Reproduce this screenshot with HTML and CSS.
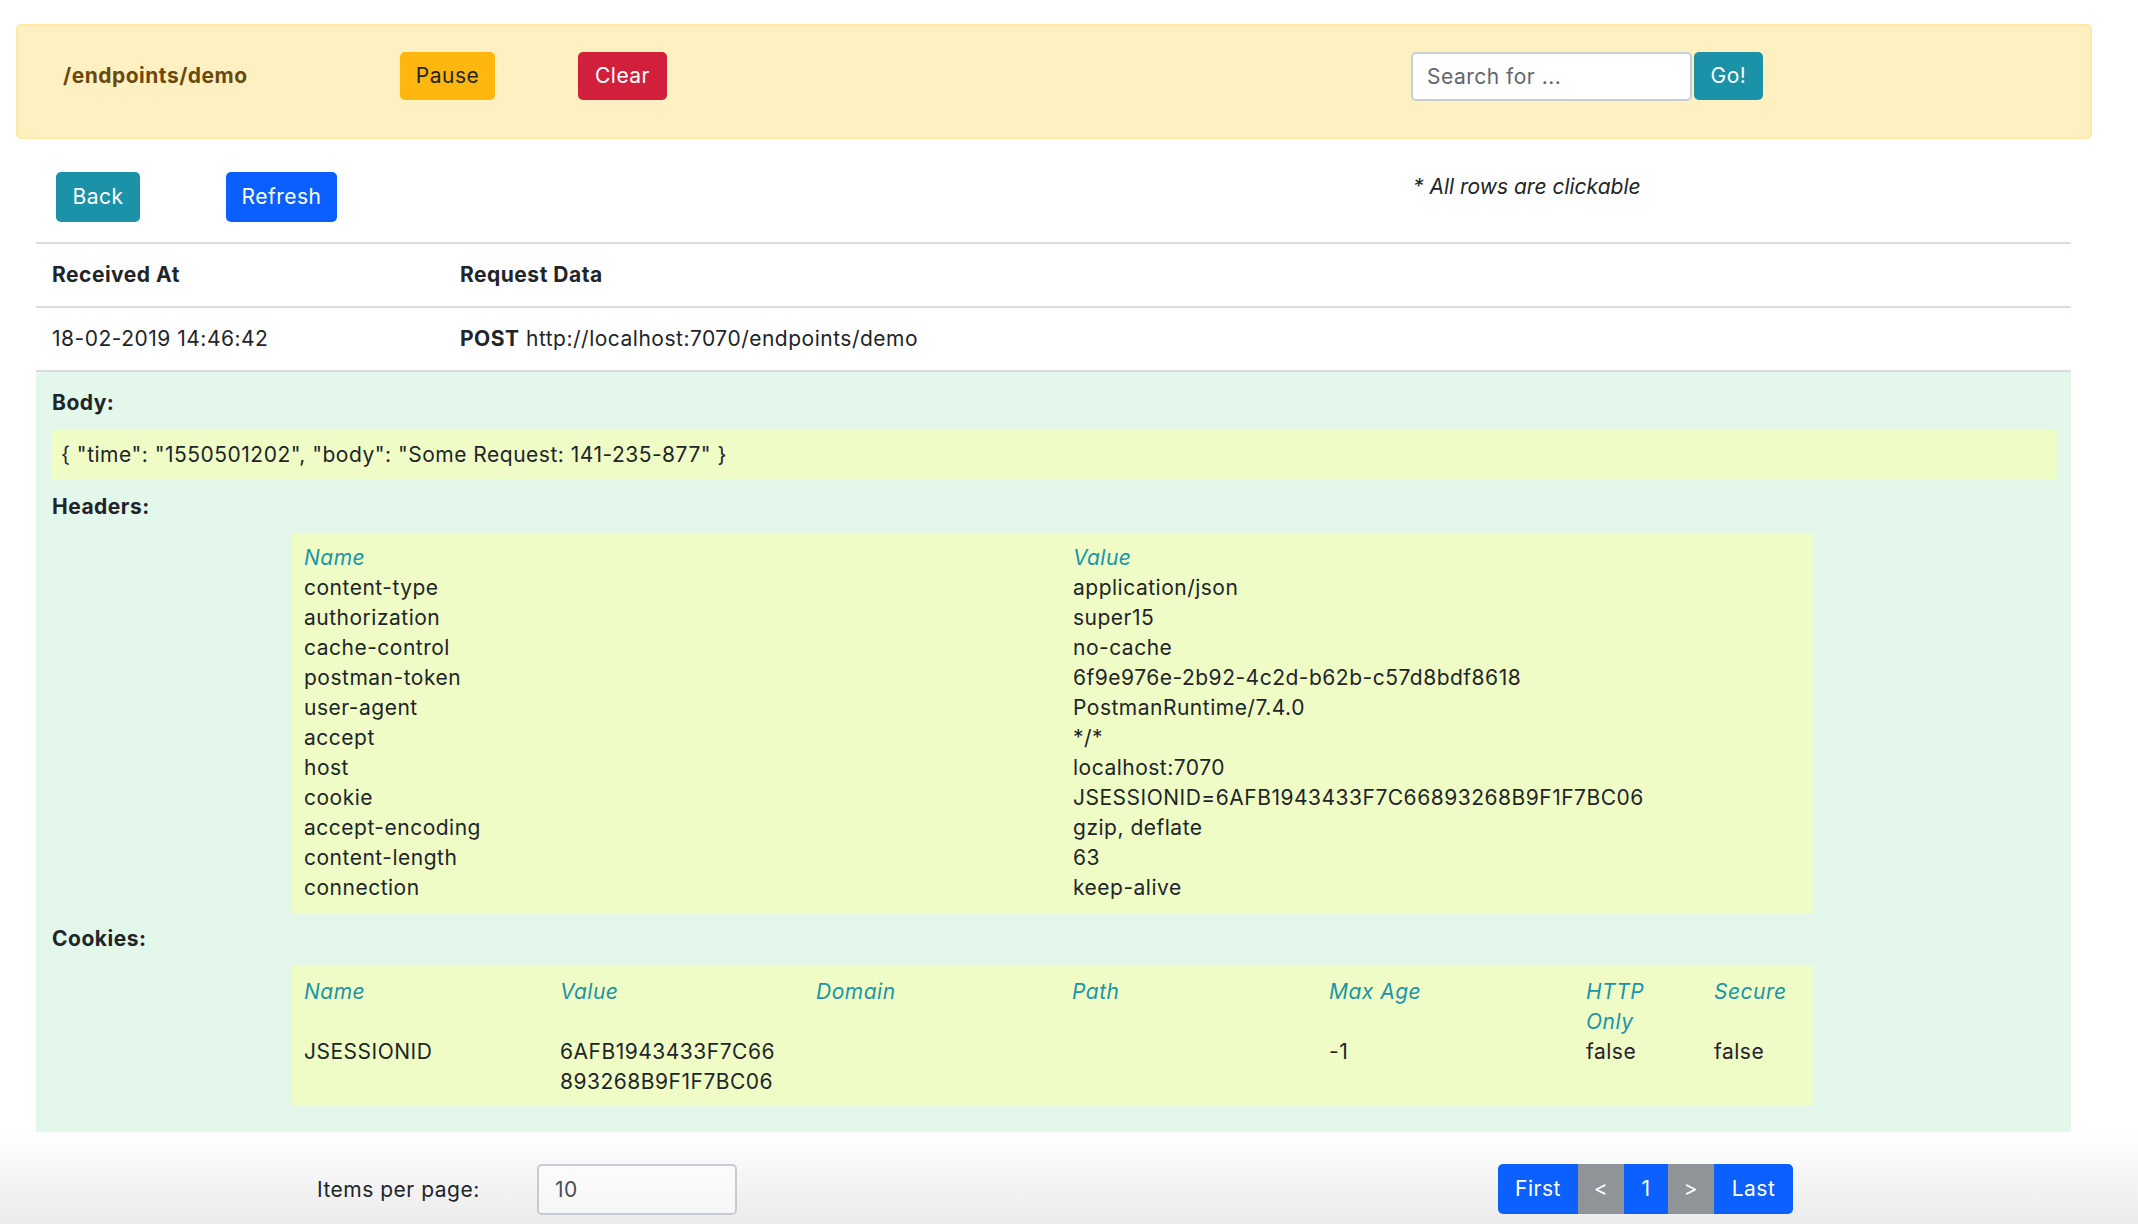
FILE: index.html
```html
<!DOCTYPE html>
<html>
<head>
<meta charset="utf-8">
<link rel="stylesheet" href="styles.css">
</head>
<body>
<div class="banner">
  <div class="title">/endpoints/demo</div>
  <button class="btn btn-warning pause">Pause</button>
  <button class="btn btn-danger clear">Clear</button>
  <div class="search">
    <input class="search-input" type="text" placeholder="Search for ...">
    <button class="btn btn-info go">Go!</button>
  </div>
</div>

<div class="content">
  <div class="toolbar">
    <button class="btn btn-info back">Back</button>
    <button class="btn btn-primary refresh">Refresh</button>
    <div class="note">* All rows are clickable</div>
  </div>

  <div class="reqtable">
    <div class="reqrow head">
      <div class="c1">Received At</div>
      <div class="c2">Request Data</div>
    </div>
    <div class="reqrow">
      <div class="c1">18-02-2019 14:46:42</div>
      <div class="c2"><b>POST</b> http://localhost:7070/endpoints/demo</div>
    </div>
  </div>

  <div class="details">
    <div class="label label-body">Body:</div>
    <div class="bodybox">{ "time": "1550501202", "body": "Some Request: 141-235-877" }</div>

    <div class="label">Headers:</div>
    <div class="kv headers">
      <div class="th">Name</div><div class="th">Value</div>
      <div>content-type</div><div>application/json</div>
      <div>authorization</div><div>super15</div>
      <div>cache-control</div><div>no-cache</div>
      <div>postman-token</div><div>6f9e976e-2b92-4c2d-b62b-c57d8bdf8618</div>
      <div>user-agent</div><div>PostmanRuntime/7.4.0</div>
      <div>accept</div><div>*/*</div>
      <div>host</div><div>localhost:7070</div>
      <div>cookie</div><div>JSESSIONID=6AFB1943433F7C66893268B9F1F7BC06</div>
      <div>accept-encoding</div><div>gzip, deflate</div>
      <div>content-length</div><div>63</div>
      <div>connection</div><div>keep-alive</div>
    </div>

    <div class="label">Cookies:</div>
    <div class="kv cookies">
      <div class="th">Name</div>
      <div class="th">Value</div>
      <div class="th">Domain</div>
      <div class="th">Path</div>
      <div class="th">Max Age</div>
      <div class="th">HTTP Only</div>
      <div class="th">Secure</div>
      <div>JSESSIONID</div>
      <div class="cval">6AFB1943433F7C66893268B9F1F7BC06</div>
      <div></div>
      <div></div>
      <div>-1</div>
      <div>false</div>
      <div>false</div>
    </div>
  </div>
</div>

<div class="footer">
  <div class="perpage">
    <span class="pp-label">Items per page:</span>
    <input class="pp-input" type="text" value="10">
  </div>
  <div class="pager">
    <span class="pg pg-blue first">First</span>
    <span class="pg pg-gray">&lt;</span>
    <span class="pg pg-blue num">1</span>
    <span class="pg pg-gray">&gt;</span>
    <span class="pg pg-blue last">Last</span>
  </div>
</div>
</body>
</html>
```

FILE: styles.css
```css
* { box-sizing: border-box; }

html, body {
  margin: 0;
  padding: 0;
  height: 1224px;
  overflow: hidden;
  background: #ffffff;
}

body {
  font-family: Inter, "Noto Sans", "Liberation Sans", sans-serif;
  font-size: 21px;
  letter-spacing: 0.5px;
  line-height: 30px;
  color: #212529;
  display: flex;
  flex-direction: column;
}

.btn {
  font-family: inherit;
  font-size: 21px;
  letter-spacing: 0.5px;
  line-height: 30px;
  border: none;
  border-radius: 5px;
  height: 48px;
  padding: 0;
  color: #ffffff;
  cursor: pointer;
}

.btn-warning { background: #ffb60f; color: #212529; }
.btn-danger { background: #d21f3c; }
.btn-info { background: #1b92a8; }
.btn-primary { background: #0b5ffe; }

/* Banner */
.banner {
  margin: 24px 46px 0 16px;
  height: 115px;
  flex: none;
  background: #fff0c2;
  border: 2px solid #ffe9a8;
  border-radius: 5px;
  display: flex;
  align-items: flex-start;
  padding-top: 26px;
}

.title {
  width: 382px;
  padding-left: 45px;
  font-weight: 700;
  color: #6a4a0c;
  margin-top: 9px;
}

.pause { width: 95px; }
.clear { width: 89px; margin-left: 83px; }

.search {
  margin-left: 744px;
  display: flex;
  align-items: flex-start;
  gap: 2px;
}

.search-input {
  width: 281px;
  height: 49px;
  border: 2px solid #c9ced6;
  border-radius: 5px;
  background: #ffffff;
  font-family: inherit;
  font-size: 21px;
  letter-spacing: 0.5px;
  padding: 0 14px;
  color: #495057;
}
.search-input::placeholder { color: #5f666d; }

.go { width: 69px; }

/* Content */
.content {
  margin: 0 67px 0 36px;
  flex: none;
}

.toolbar {
  display: flex;
  align-items: flex-start;
  margin-top: 33px;
  height: 70px;
}

.back { width: 84px; height: 50px; margin-left: 20px; }
.refresh { width: 111px; height: 50px; margin-left: 86px; }

.note {
  margin-left: 1076px;
  font-style: italic;
  letter-spacing: 0;
}

.reqtable {
  border-top: 2px solid #d8dde2;
}

.reqrow {
  display: flex;
  height: 64px;
  align-items: center;
  border-bottom: 2px solid #d8dde2;
}
.reqrow.head { font-weight: 700; }

.c1 { width: 424px; padding-left: 16px; }
.c2 { flex: 1; }

/* Details */
.details {
  background: #e3f7ea;
  padding: 16px 14px 26px 16px;
}

.label {
  font-weight: 700;
  margin-bottom: 11px;
}
.label-body { margin-bottom: 12px; }

.bodybox {
  background: #effcc6;
  padding: 10px 10px 9px 10px;
  margin-bottom: 13px;
  margin-left: -1px;
}

.kv {
  background: #effcc6;
  margin-left: 240px;
  width: 1522px;
  display: grid;
}

.kv > div { padding: 0 12px; }

.th {
  color: #1a95a8;
  font-style: italic;
}

.headers {
  grid-template-columns: 769px 1fr;
  padding: 10px 0 11px 0;
  margin-bottom: 10px;
}

.cookies {
  grid-template-columns: 256px 256px 256px 257px 257px 128px 1fr;
  padding: 12px 0 9px 0;
}

.cookies .th:nth-child(6) { padding-right: 18px; }

.cval {
  word-break: break-all;
  padding-right: 22px !important;
}

/* Footer */
.footer {
  flex: 1;
  background: linear-gradient(#ffffff, #ebebeb);
  display: flex;
  align-items: flex-start;
  padding-top: 32px;
}

.perpage {
  display: flex;
  align-items: center;
  margin-left: 317px;
}

.pp-label { width: 220px; }

.pp-input {
  width: 200px;
  height: 51px;
  border: 2px solid #c6cbd3;
  border-radius: 5px;
  background: rgba(255,255,255,0.5);
  font-family: inherit;
  font-size: 21px;
  letter-spacing: 0.5px;
  padding: 0 16px;
  color: #495057;
}

.pager {
  display: flex;
  margin-left: 761px;
  height: 50px;
}

.pg {
  display: flex;
  align-items: center;
  justify-content: center;
  height: 50px;
  color: #ffffff;
}
.pg-blue { background: #0b60fe; }
.pg-gray { background: #909397; width: 46px; }
.first { width: 80px; border-radius: 5px 0 0 5px; }
.num { width: 44px; }
.last { width: 79px; border-radius: 0 5px 5px 0; }
```
